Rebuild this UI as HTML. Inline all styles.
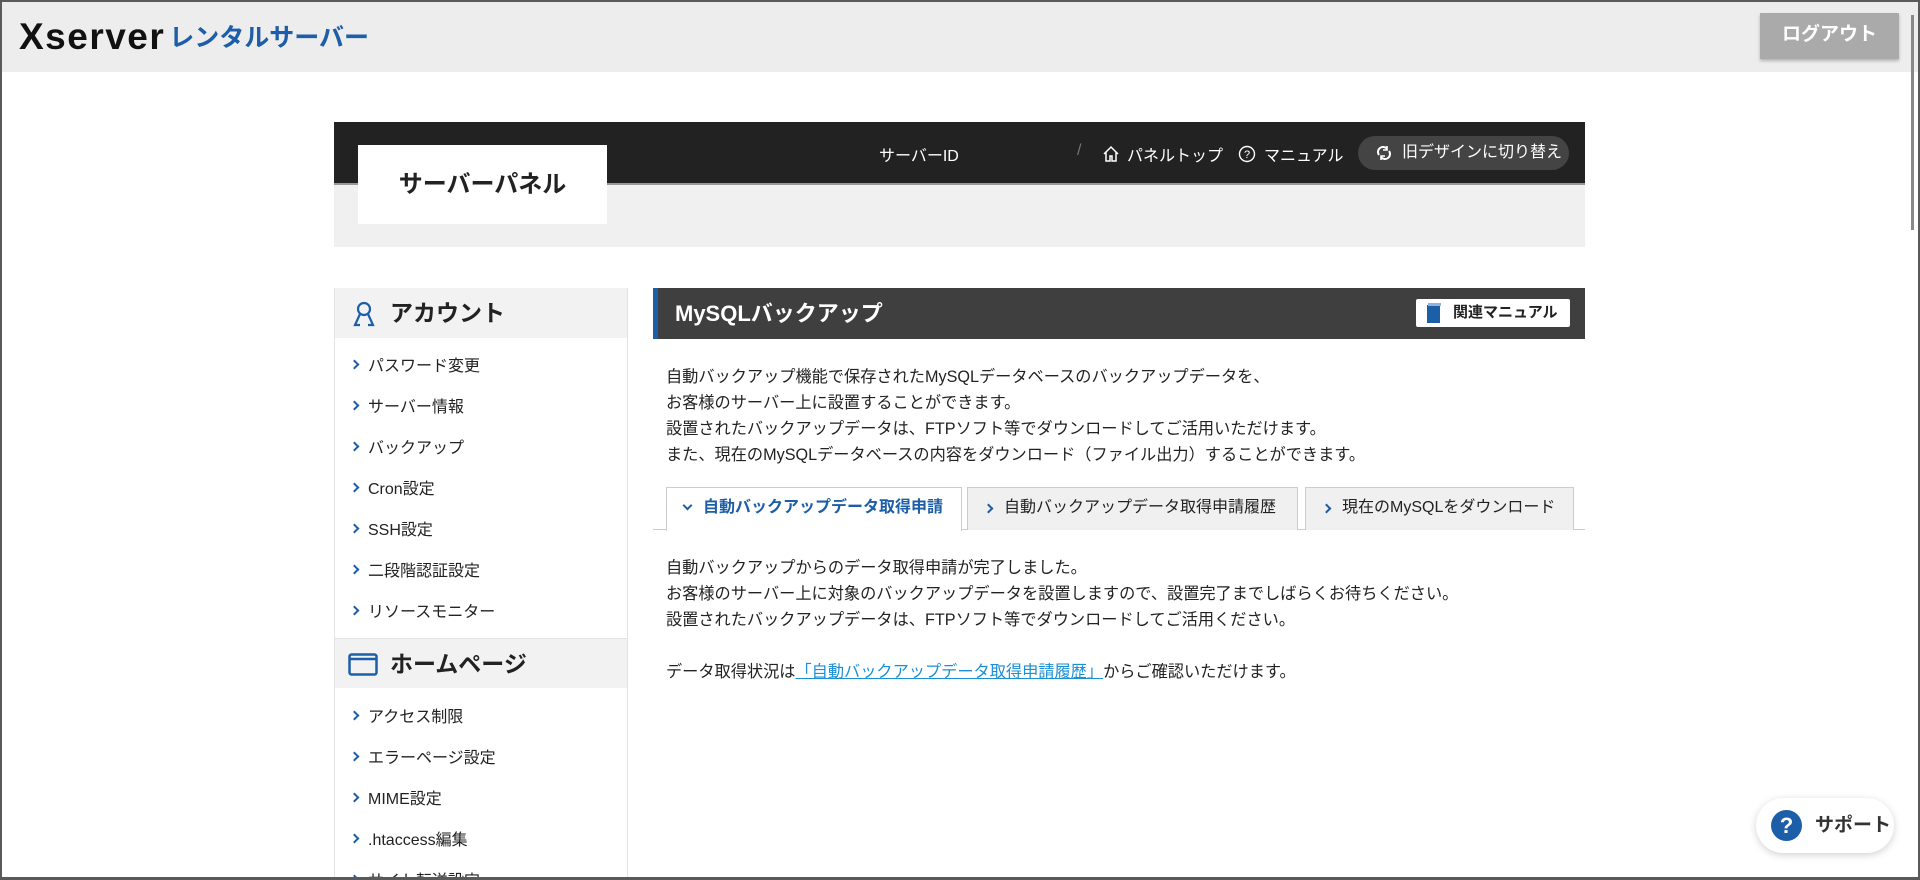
<!DOCTYPE html>
<html><head><meta charset="utf-8"><style>
*{box-sizing:border-box;margin:0;padding:0}
html,body{width:1920px;height:880px;overflow:hidden}
body{background:#fff;font-family:"Liberation Sans","Noto Sans CJK JP",sans-serif;color:#222;position:relative}
.frame{position:absolute;left:0;top:0;width:1920px;height:880px;border:2px solid #5a5a5a;border-bottom-width:3px;pointer-events:none;z-index:9}
.abs{position:absolute}
.hdr{left:0;top:0;width:1920px;height:72px;background:#ededed}
.logo{left:19px;top:16px;font-size:37px;font-weight:bold;letter-spacing:1.5px;color:#111;white-space:nowrap}
.logo span{color:#1d5ea8;font-size:25px;letter-spacing:0;margin-left:4px;vertical-align:3px}
.logout{left:1760px;top:13px;width:139px;height:46px;background:#aaa;color:#fff;font-weight:bold;font-size:19px;text-align:center;line-height:44px;box-shadow:0 2px 3px rgba(0,0,0,.25)}
.sb{left:1911px;top:15px;width:3px;height:215px;background:#888}
.dark{left:334px;top:122px;width:1251px;height:63px;background:#222;border-bottom:2px solid #999}
.gray{left:334px;top:185px;width:1251px;height:62px;background:#f0f0f0}
.pbox{left:358px;top:145px;width:249px;height:79px;background:#fff;font-size:24px;font-weight:bold;text-align:center;line-height:79px;color:#222}
.nav{color:#fff;font-size:16px;top:142px}
.btn{left:1358px;top:136px;width:211px;height:34px;background:#444;border-radius:17px;color:#fff;font-size:16px;line-height:34px;padding-left:44px}
.side{left:334px;top:288px;width:294px;height:592px;border:1px solid #e4e4e4;border-top:none;overflow:hidden}
.sh{position:absolute;left:0;width:293px;height:50px;background:#f2f2f2;font-size:23px;font-weight:bold;line-height:50px;padding-left:55px}
.si{position:absolute;left:33px;font-size:16px;color:#222}
.si:before{content:"";position:absolute;left:-17px;top:9px;width:5px;height:5px;border-right:2.5px solid #1d5ea8;border-bottom:2.5px solid #1d5ea8;transform:rotate(-45deg)}
.title{left:653px;top:288px;width:932px;height:51px;background:#3f3f3f;border-left:5px solid #1d5ea8;color:#fff;font-size:22px;font-weight:bold;line-height:51px;padding-left:17px}
.rel{left:1416px;top:299px;width:154px;height:28px;background:#fff;border-radius:2px;font-size:15px;font-weight:bold;line-height:28px;padding-left:37px;color:#222}
.p{left:666px;font-size:16.2px;line-height:26px;color:#222}
.tab{top:487px;height:43px;border:1px solid #ccc;border-bottom:none;font-size:16px;line-height:40px;padding-left:36px;background:#f0f0f0}
.tab:before{content:"";position:absolute;left:17px;top:17px;width:5px;height:5px;border-right:2.5px solid #1d5ea8;border-bottom:2.5px solid #1d5ea8;transform:rotate(-45deg)}
.tab.on{background:#fff;color:#1d5ea8;font-weight:bold;height:44px}
.tab.on:before{transform:rotate(45deg);top:14px}
.tline{left:653px;top:529px;width:932px;height:1px;background:#ccc}
a{color:#1a8fd6;text-decoration:underline}
.sup{left:1756px;top:798px;width:138px;height:55px;background:#fff;border-radius:28px;box-shadow:0 2px 8px rgba(0,0,0,.18);font-size:19px;font-weight:bold;color:#333;line-height:55px;padding-left:59px}
.q{position:absolute;left:15px;top:12px;width:31px;height:31px;border-radius:50%;background:#1d5ea8;color:#fff;text-align:center;line-height:31px;font-size:22px;padding:0}
</style></head><body>
<div class="frame"></div>
<div class="abs hdr"></div>
<div class="abs logo">Xserver<span>レンタルサーバー</span></div>
<div class="abs logout">ログアウト</div>
<div class="abs sb"></div>
<div class="abs dark"></div>
<div class="abs gray"></div>
<div class="abs pbox">サーバーパネル</div>
<div class="abs nav" style="left:879px">サーバーID</div>
<div class="abs nav" style="left:1077px;color:#777">/</div>
<svg class="abs" style="left:1102px;top:145px" width="18" height="18" viewBox="0 0 18 18" fill="none" stroke="#fff" stroke-width="1.5"><path d="M2 9L9 2l7 7M4 7v9h4v-5h2v5h4V7"/></svg>
<div class="abs nav" style="left:1127px">パネルトップ</div>
<svg class="abs" style="left:1238px;top:145px" width="18" height="18" viewBox="0 0 18 18"><circle cx="9" cy="9" r="7.5" fill="none" stroke="#fff" stroke-width="1.4"/><text x="9" y="13" font-size="11" fill="#fff" text-anchor="middle" font-family="Liberation Sans">?</text></svg>
<div class="abs nav" style="left:1264px">マニュアル</div>
<div class="abs btn">旧デザインに切り替え</div>
<svg class="abs" style="left:1376px;top:144px" width="16" height="18" viewBox="0 0 16 18" fill="none" stroke="#fff" stroke-width="2"><path d="M3 11a5 5 0 0 1 8-6M13 7a5 5 0 0 1-8 6"/><path d="M11 2v4H7M5 16v-4h4" stroke-width="1.6"/></svg>

<div class="abs side">
<div class="sh" style="top:0">アカウント</div>
<svg style="position:absolute;left:17px;top:13px" width="24" height="26" viewBox="0 0 24 26" fill="none" stroke="#1d5ea8" stroke-width="2.2"><circle cx="12" cy="8" r="6"/><path d="M8 13L3 24h5M16 13l5 11h-5"/></svg>
<div class="si" style="top:64px">パスワード変更</div>
<div class="si" style="top:105px">サーバー情報</div>
<div class="si" style="top:146px">バックアップ</div>
<div class="si" style="top:187px">Cron設定</div>
<div class="si" style="top:228px">SSH設定</div>
<div class="si" style="top:269px">二段階認証設定</div>
<div class="si" style="top:310px">リソースモニター</div>
<div class="sh" style="top:350px;border-top:1px solid #e4e4e4">ホームページ</div>
<svg style="position:absolute;left:13px;top:365px" width="30" height="23" viewBox="0 0 30 23" fill="none" stroke="#1d5ea8" stroke-width="2.5"><rect x="1.5" y="1.5" width="27" height="20" rx="2"/><path d="M1.5 6h27"/></svg>
<div class="si" style="top:415px">アクセス制限</div>
<div class="si" style="top:456px">エラーページ設定</div>
<div class="si" style="top:497px">MIME設定</div>
<div class="si" style="top:538px">.htaccess編集</div>
<div class="si" style="top:579px">サイト転送設定</div>
</div>

<div class="abs title">MySQLバックアップ</div>
<div class="abs rel">関連マニュアル</div>
<svg class="abs" style="left:1427px;top:303px" width="14" height="20" viewBox="0 0 14 20"><rect x="0" y="2" width="13" height="18" fill="#1d5ea8"/><rect x="1" y="0" width="13" height="3" fill="#8fb3dc"/></svg>
<div class="abs p" style="top:364px">自動バックアップ機能で保存されたMySQLデータベースのバックアップデータを、<br>お客様のサーバー上に設置することができます。<br>設置されたバックアップデータは、FTPソフト等でダウンロードしてご活用いただけます。<br>また、現在のMySQLデータベースの内容をダウンロード（ファイル出力）することができます。</div>
<div class="abs tline"></div>
<div class="abs tab on" style="left:666px;width:296px">自動バックアップデータ取得申請</div>
<div class="abs tab" style="left:967px;width:331px">自動バックアップデータ取得申請履歴</div>
<div class="abs tab" style="left:1305px;width:269px">現在のMySQLをダウンロード</div>
<div class="abs p" style="top:555px">自動バックアップからのデータ取得申請が完了しました。<br>お客様のサーバー上に対象のバックアップデータを設置しますので、設置完了までしばらくお待ちください。<br>設置されたバックアップデータは、FTPソフト等でダウンロードしてご活用ください。<br><br>データ取得状況は<a>「自動バックアップデータ取得申請履歴」</a>からご確認いただけます。</div>
<div class="abs sup"><span class="q">?</span>サポート</div>
</body></html>
